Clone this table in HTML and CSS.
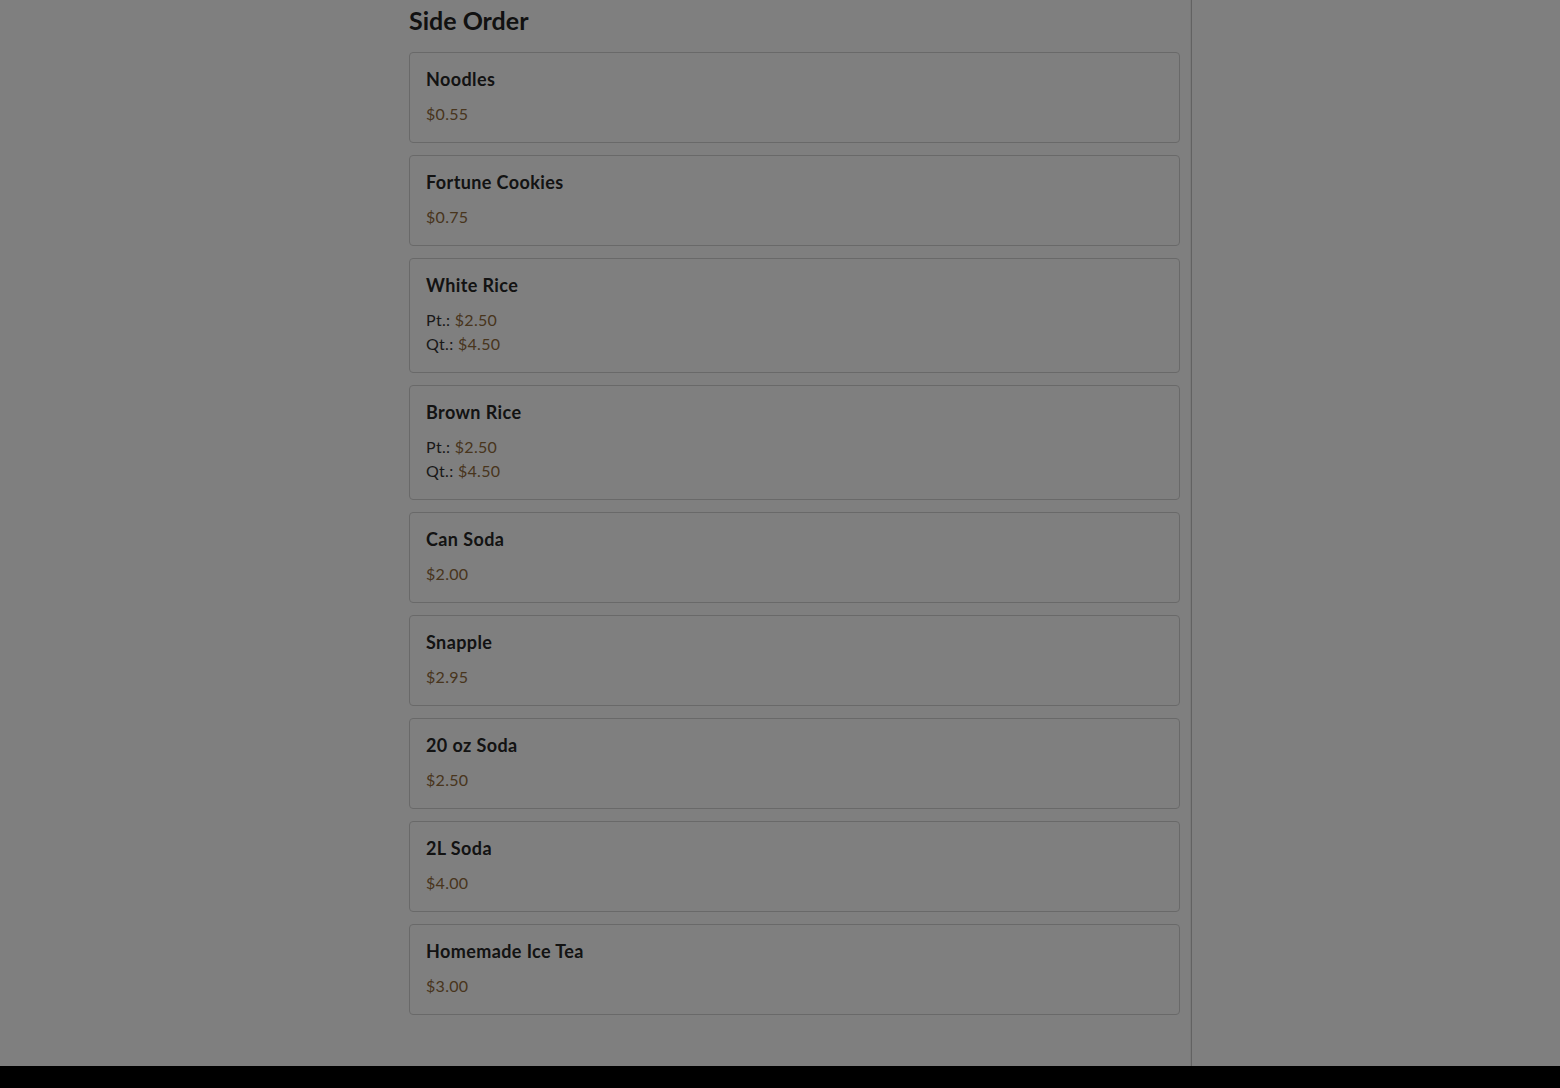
FILE: index.html
```html
<!DOCTYPE html>
<html lang="en">
<head>
<meta charset="utf-8">
<title>Side Order</title>
<link rel="stylesheet" href="styles.css">
</head>
<body>
<div class="layout">
  <div class="left-space"></div>
  <main class="menu">
    <h2 class="section-title">Side Order</h2>
    <div class="items">
      <div class="card"><div class="name">Noodles</div><div class="prices"><div class="price">$0.55</div></div></div>
      <div class="card"><div class="name">Fortune Cookies</div><div class="prices"><div class="price">$0.75</div></div></div>
      <div class="card"><div class="name">White Rice</div><div class="prices"><div><span class="label">Pt.:</span> <span class="price">$2.50</span></div><div><span class="label">Qt.:</span> <span class="price">$4.50</span></div></div></div>
      <div class="card"><div class="name">Brown Rice</div><div class="prices"><div><span class="label">Pt.:</span> <span class="price">$2.50</span></div><div><span class="label">Qt.:</span> <span class="price">$4.50</span></div></div></div>
      <div class="card"><div class="name">Can Soda</div><div class="prices"><div class="price">$2.00</div></div></div>
      <div class="card"><div class="name">Snapple</div><div class="prices"><div class="price">$2.95</div></div></div>
      <div class="card"><div class="name">20 oz Soda</div><div class="prices"><div class="price">$2.50</div></div></div>
      <div class="card"><div class="name">2L Soda</div><div class="prices"><div class="price">$4.00</div></div></div>
      <div class="card"><div class="name">Homemade Ice Tea</div><div class="prices"><div class="price">$3.00</div></div></div>
    </div>
  </main>
  <aside class="side"></aside>
</div>
<footer class="footer"></footer>
<div class="overlay"></div>
</body>
</html>
```

FILE: styles.css
```css
* { box-sizing: border-box; }
html, body { margin: 0; padding: 0; }
body {
  background: #ffffff;
  font-family: "Lato", "Open Sans", sans-serif;
  color: #333;
}
.layout {
  display: grid;
  grid-template-columns: 409px 783px 1fr;
  min-height: 1066px;
}
.menu {
  padding: 4px 11px 51px 0;
  border-right: 1px solid #c4c4c4;
  box-shadow: inset -6px 0 0 -5px #f2f2f2;
}
.section-title {
  margin: 0 0 16px;
  font-size: 25px;
  line-height: 32px;
  font-weight: 700;
  letter-spacing: 0;
  color: #222;
}
.items {
  display: flex;
  flex-direction: column;
  gap: 12px;
}
.card {
  border: 1px solid #d2d2d2;
  border-radius: 4px;
  background: #fff;
  padding: 16px;
}
.name {
  font-size: 18px;
  line-height: 21px;
  font-weight: 700;
  letter-spacing: 0.4px;
  color: #262626;
  margin-bottom: 12px;
}
.prices {
  font-size: 16px;
  line-height: 24px;
  letter-spacing: 0.3px;
}
.label { color: #333; }
.price { color: #906a3a; }
.footer {
  height: 60px;
  background: #000;
}
.overlay {
  position: fixed;
  inset: 0;
  background: rgba(0, 0, 0, 0.5);
}
```
